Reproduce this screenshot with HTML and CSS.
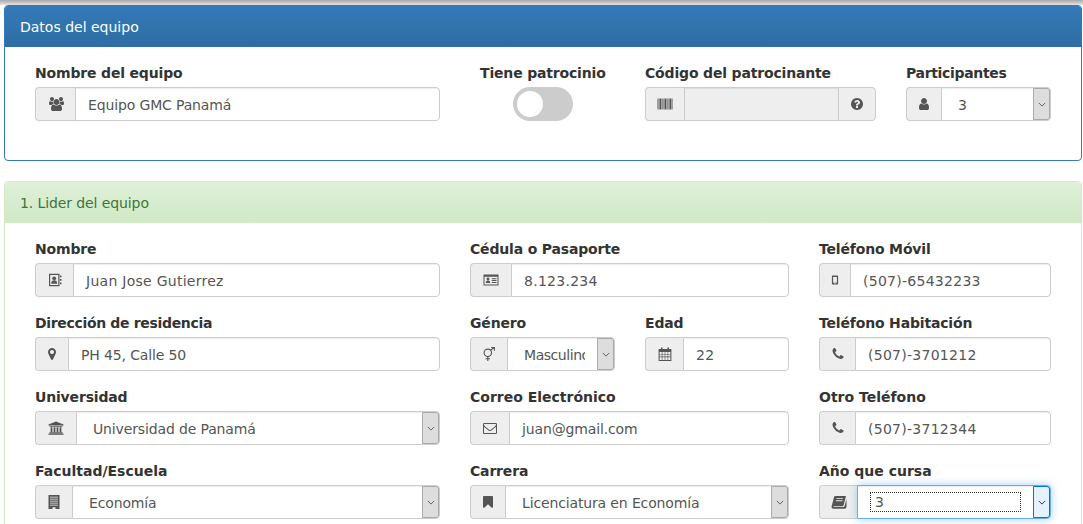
FILE: index.html
```html
<!DOCTYPE html>
<html lang="es">
<head>
<meta charset="utf-8">
<title>Datos del equipo</title>
<link rel="stylesheet" href="styles.css">
</head>
<body>
<svg class="defs" width="0" height="0" aria-hidden="true">
  <symbol id="i-users" viewBox="0 0 1920 1792"><path d="M657 896q-162 5-265 128h-134q-82 0-138-40.5t-56-118.5q0-353 124-353 6 0 43.5 21t97.5 42.5 119 21.5q67 0 133-23-5 37-5 66 0 139 81 256zm1071 637q0 120-73 189.5t-194 69.5h-874q-121 0-194-69.5t-73-189.5q0-53 3.5-103.5t14-109 26.5-108.5 43-97.5 62-81 85.5-53.5 111.5-20q10 0 43 21.5t73 48 107 48 135 21.5 135-21.5 107-48 73-48 43-21.5q61 0 111.5 20t85.5 53.5 62 81 43 97.5 26.5 108.5 14 109 3.5 103.5zm-1024-1277q0 106-75 181t-181 75-181-75-75-181 75-181 181-75 181 75 75 181zm704 384q0 159-112.5 271.5t-271.5 112.5-271.5-112.5-112.5-271.5 112.5-271.5 271.5-112.5 271.5 112.5 112.5 271.5zm576 225q0 78-56 118.5t-138 40.5h-134q-103-123-265-128 81-117 81-256 0-29-5-66 66 23 133 23 59 0 119-21.5t97.5-42.5 43.5-21q124 0 124 353zm-128-609q0 106-75 181t-181 75-181-75-75-181 75-181 181-75 181 75 75 181z"/></symbol>
  <symbol id="i-barcode" viewBox="0 0 16 14"><path d="M.5 1.500h1v11h-1zM2 1.500h.6v11H2zM3 1.500h1v11H3zM4.500 1.500h.6v11h-.6zM5.500 1.500h1v11h-1zM7 1.500h.6v11H7zM8 1.500h1v11H8zM9.500 1.500h.6v11h-.6zM10.500 1.500h1v11h-1zM12 1.500h.6v11H12zM13 1.500h1v11h-1zM14.500 1.500h1v11h-1z"/></symbol>
  <symbol id="i-question" viewBox="0 0 1792 1792"><path d="M1024 1376v-192q0-14-9-23t-23-9h-192q-14 0-23 9t-9 23v192q0 14 9 23t23 9h192q14 0 23-9t9-23zm256-672q0-88-55.5-163t-138.5-116-170-41q-243 0-371 213-15 24 8 42l132 100q7 6 19 6 16 0 25-12 53-68 86-92 34-24 86-24 48 0 85.5 26t37.5 59q0 38-20 61t-68 45q-63 28-115.5 86.5t-52.5 125.5v36q0 14 9 23t23 9h192q14 0 23-9t9-23q0-19 21.5-49.5t54.5-49.5q32-18 49-28.5t46-35 44.5-48 28-60.5 12.5-81zm384 192q0 209-103 385.5t-279.5 279.5-385.5 103-385.5-103-279.5-279.5-103-385.5 103-385.5 279.5-279.5 385.5-103 385.5 103 279.5 279.5 103 385.5z"/></symbol>
  <symbol id="i-user" viewBox="0 0 1792 1792"><path d="M1536 1399q0 109-62.5 187t-150.5 78h-854q-88 0-150.5-78t-62.5-187q0-85 8.5-160.5t31.5-152 58.5-131 94-89 134.5-34.5q131 128 313 128t313-128q76 0 134.5 34.5t94 89 58.5 131 31.5 152 8.5 160.5zm-256-887q0 159-112.5 271.5t-271.5 112.5-271.5-112.5-112.5-271.5 112.5-271.5 271.5-112.5 271.5 112.5 112.5 271.5z"/></symbol>
  <symbol id="i-contact" viewBox="0 0 14 14"><path fill-rule="evenodd" d="M1 .8h10.500v12.400H1zM2.200 2v10h8.100V2z"/><path d="M12 2.500h1.500v1.800H12zM12 6h1.500v1.800H12zM12 9.500h1.500v1.800H12z"/><circle cx="6.200" cy="5.300" r="1.900"/><path d="M3.200 10.800c0-2.500 1.100-3.600 3-3.600s3 1.100 3 3.600z"/></symbol>
  <symbol id="i-idcard" viewBox="0 0 16 14"><path fill-rule="evenodd" d="M.5 1.500h15v11H.5zM1.500 3.800v7.700h13V3.800z"/><circle cx="5" cy="6" r="1.400"/><path d="M2.800 10c0-1.700.9-2.400 2.200-2.400s2.200.7 2.200 2.400zM8.800 5.300h4.700v1H8.800zM8.800 7.100h4.700v1H8.800zM8.800 8.900h4.700v1H8.800z"/></symbol>
  <symbol id="i-mobile" viewBox="0 0 14 14"><path fill-rule="evenodd" d="M4.900 2.400h4.200c.6 0 1 .4 1 1v7.200c0 .6-.4 1-1 1H4.900c-.6 0-1-.4-1-1V3.400c0-.6.4-1 1-1zM5.100 3.900v5.800h3.800V3.900zM6.400 10.300v.7h1.200v-.7z"/></symbol>
  <symbol id="i-marker" viewBox="0 0 1792 1792"><path d="M1152 640q0-106-75-181t-181-75-181 75-75 181 75 181 181 75 181-75 75-181zm256 0q0 109-33 179l-364 774q-16 33-47.500 52t-67.500 19-67.500-19-46.500-52l-365-774q-33-70-33-179 0-212 150-362t362-150 362 150 150 362z"/></symbol>
  <symbol id="i-mercury" viewBox="0 0 14 14"><g fill="none" stroke="currentColor" stroke-width="1.100"><circle cx="5.800" cy="5.800" r="3.700"/><path d="M8.400 3.200 12.200 .5M9.200 .5h3.200v3.200M5.800 9.500V14M3.600 11.800h4.400"/></g></symbol>
  <symbol id="i-calendar" viewBox="0 0 14 14"><path fill-rule="evenodd" d="M.6 2h12.800v12H.6zM1.600 5v2h2.200V5zM4.400 5v2h2.300V5zM7.300 5v2h2.300V5zM10.200 5v2h2.200V5zM1.600 7.600v2h2.200v-2zM4.400 7.600v2h2.300v-2zM7.300 7.600v2h2.300v-2zM10.200 7.600v2h2.200v-2zM1.600 10.200V13h2.200v-2.800zM4.400 10.200V13h2.300v-2.800zM7.300 10.200V13h2.300v-2.800zM10.200 10.200V13h2.200v-2.800z"/><path d="M3 .6h1.500v3H3zM9.500 .6H11v3H9.500z"/></symbol>
  <symbol id="i-phone" viewBox="0 0 1792 1792"><path d="M1600 1240q0 27-10 70.500t-21 68.500q-21 50-122 106-94 51-186 51-27 0-53-3.500t-57.500-12.500-47-14.500-55.500-20.500-49-18q-98-35-175-83-127-79-264-216t-216-264q-48-77-83-175-3-9-18-49t-20.500-55.500-14.500-47-12.500-57.500-3.500-53q0-92 51-186 56-101 106-122 25-11 68.500-21t70.500-10q14 0 21 3 18 6 53 76 11 19 30 54t35 63.500 31 53.500q3 4 17.500 25t21.500 35.500 7 28.500q0 20-28.500 50t-62 55-62 53-28.500 46q0 9 5 22.500t8.500 20.500 14 24 11.500 19q76 137 174 235t235 174q2 1 19 11.500t24 14 20.500 8.500 22.500 5q18 0 46-28.500t53-62 55-62 50-28.500q14 0 28.500 7t35.500 21.500 25 17.500q25 15 53.500 31t63.500 35 54 30q70 35 76 53 3 7 3 21z"/></symbol>
  <symbol id="i-university" viewBox="0 0 16 14"><path d="M8 .5 15.500 3.500v1h-15v-1zM1.500 5h13v.8h-13zM2.600 6.300h1.800v4.600H2.600zM5.600 6.300h1.800v4.600H5.600zM8.600 6.300h1.800v4.600H8.600zM11.600 6.300h1.800v4.600h-1.800zM1.500 11.300h13v.9h-13zM.5 12.500h15v1.200H.5z"/></symbol>
  <symbol id="i-envelope" viewBox="0 0 1792 1792"><path d="M1664 1504v-768q-32 36-69 66-268 206-426 338-51 43-83 67t-86.500 48.500-102.500 24.500h-2q-48 0-102.500-24.500t-86.500-48.500-83-67q-158-132-426-338-37-30-69-66v768q0 13 9.500 22.500t22.500 9.500h1472q13 0 22.500-9.500t9.500-22.500zm0-1051v-24.500l-.5-13-3-12.500-5.500-9-9-7.500-14-2.500h-1472q-13 0-22.500 9.500t-9.500 22.500q0 168 147 284 193 152 401 317 6 5 35 29.500t46 37.500 44.500 31.500 50.500 27.500 43 9h2q20 0 43-9t50.500-27.500 44.500-31.500 46-37.500 35-29.500q208-165 401-317 54-43 100.500-115.500t46.500-131.500zm128-37v1088q0 66-47 113t-113 47h-1472q-66 0-113-47t-47-113v-1088q0-66 47-113t113-47h1472q66 0 113 47t47 113z"/></symbol>
  <symbol id="i-building" viewBox="0 0 14 14"><path fill-rule="evenodd" d="M1.500 0h11v14H8.500v-1.800h-3V14h-4zM3 1.700v.8h8v-.8zM3 3.700v.8h8v-.8zM3 5.700v.8h8v-.8zM3 7.700v.8h8v-.8zM3 9.700v.8h8v-.8z"/></symbol>
  <symbol id="i-bookmark" viewBox="0 0 1792 1792"><path d="M1420 128q23 0 44 9 33 13 52.500 41t19.500 62v1289q0 34-19.500 62t-52.500 41q-19 8-44 8-48 0-83-32l-441-424-441 424q-36 33-83 33-23 0-44-9-33-13-52.500-41t-19.500-62v-1289q0-34 19.500-62t52.500-41q21-9 44-9h1048z"/></symbol>
  <symbol id="i-book" viewBox="0 0 16 14"><path fill-rule="evenodd" d="M4.500 1H15l-2.400 9.200c-.2.700-.7 1-1.300 1H3c-.7 0-.9.9-.1 .9h9.600c.5 0 .8-.3 1-.8L15.500 4v8c-.2 1-1 1.800-2 1.800H2.500C1 13.800.2 12.500.6 11.200L3 2.200C3.200 1.500 3.800 1 4.500 1zM5.600 3.200l-.2 .9h6.500l.2-.9zM5 5.300l-.2 .9h6.500l.2-.9z"/></symbol>
  <symbol id="i-chevron" viewBox="0 0 10 6"><path d="M1 1 5 5 9 1" fill="none" stroke="currentColor" stroke-width="1.100"/></symbol>
</svg>

<div class="topshade"></div>
<main class="page">
  <section class="panel panel-primary">
    <h2 class="panel-heading">Datos del equipo</h2>
    <div class="panel-body team-grid">
      <div class="field">
        <label class="label">Nombre del equipo</label>
        <div class="group">
          <span class="addon w40"><svg class="icon"><use href="#i-users"/></svg></span>
          <div class="control">Equipo GMC Panamá</div>
        </div>
      </div>
      <div class="field switch-field">
        <label class="label">Tiene patrocinio</label>
        <span class="switch"><span class="knob"></span></span>
      </div>
      <div class="field">
        <label class="label">Código del patrocinante</label>
        <div class="group">
          <span class="addon w39"><svg class="icon"><use href="#i-barcode"/></svg></span>
          <div class="control disabled"></div>
          <span class="addon addon-end w38"><svg class="icon"><use href="#i-question"/></svg></span>
        </div>
      </div>
      <div class="field last-field">
        <label class="label snug-label">Participantes</label>
        <div class="group">
          <span class="addon w35"><svg class="icon"><use href="#i-user"/></svg></span>
          <div class="control select"><span class="val">3</span><span class="arrow"><svg class="chev"><use href="#i-chevron"/></svg></span></div>
        </div>
      </div>
    </div>
  </section>

  <section class="panel panel-success">
    <h2 class="panel-heading">1. Lider del equipo</h2>
    <div class="panel-body leader-grid">
      <div class="field">
        <label class="label">Nombre</label>
        <div class="group">
          <span class="addon w38"><svg class="icon"><use href="#i-contact"/></svg></span>
          <div class="control wide">Juan Jose Gutierrez</div>
        </div>
      </div>
      <div class="field span2">
        <label class="label">Cédula o Pasaporte</label>
        <div class="group">
          <span class="addon w41"><svg class="icon"><use href="#i-idcard"/></svg></span>
          <div class="control wide">8.123.234</div>
        </div>
      </div>
      <div class="field">
        <label class="label">Teléfono Móvil</label>
        <div class="group">
          <span class="addon w31"><svg class="icon"><use href="#i-mobile"/></svg></span>
          <div class="control wide">(507)-65432233</div>
        </div>
      </div>

      <div class="field">
        <label class="label snug-label">Dirección de residencia</label>
        <div class="group">
          <span class="addon w33"><svg class="icon"><use href="#i-marker"/></svg></span>
          <div class="control">PH 45, Calle 50</div>
        </div>
      </div>
      <div class="field">
        <label class="label">Género</label>
        <div class="group">
          <span class="addon w37"><svg class="icon"><use href="#i-mercury"/></svg></span>
          <div class="control select snug"><span class="val">Masculino</span><span class="arrow"><svg class="chev"><use href="#i-chevron"/></svg></span></div>
        </div>
      </div>
      <div class="field">
        <label class="label">Edad</label>
        <div class="group">
          <span class="addon w38"><svg class="icon"><use href="#i-calendar"/></svg></span>
          <div class="control wide">22</div>
        </div>
      </div>
      <div class="field">
        <label class="label">Teléfono Habitación</label>
        <div class="group">
          <span class="addon w36"><svg class="icon"><use href="#i-phone"/></svg></span>
          <div class="control wide">(507)-3701212</div>
        </div>
      </div>

      <div class="field">
        <label class="label">Universidad</label>
        <div class="group">
          <span class="addon w41"><svg class="icon"><use href="#i-university"/></svg></span>
          <div class="control select"><span class="val">Universidad de Panamá</span><span class="arrow"><svg class="chev"><use href="#i-chevron"/></svg></span></div>
        </div>
      </div>
      <div class="field span2">
        <label class="label loose-label">Correo Electrónico</label>
        <div class="group">
          <span class="addon w39"><svg class="icon"><use href="#i-envelope"/></svg></span>
          <div class="control">juan@gmail.com</div>
        </div>
      </div>
      <div class="field">
        <label class="label loose-label">Otro Teléfono</label>
        <div class="group">
          <span class="addon w36"><svg class="icon"><use href="#i-phone"/></svg></span>
          <div class="control wide">(507)-3712344</div>
        </div>
      </div>

      <div class="field">
        <label class="label loose-label">Facultad/Escuela</label>
        <div class="group">
          <span class="addon w37"><svg class="icon"><use href="#i-building"/></svg></span>
          <div class="control select"><span class="val">Economía</span><span class="arrow"><svg class="chev"><use href="#i-chevron"/></svg></span></div>
        </div>
      </div>
      <div class="field span2">
        <label class="label">Carrera</label>
        <div class="group">
          <span class="addon w35"><svg class="icon"><use href="#i-bookmark"/></svg></span>
          <div class="control select"><span class="val">Licenciatura en Economía</span><span class="arrow"><svg class="chev"><use href="#i-chevron"/></svg></span></div>
        </div>
      </div>
      <div class="field">
        <label class="label loose-label">Año que cursa</label>
        <div class="group">
          <span class="addon w38"><svg class="icon"><use href="#i-book"/></svg></span>
          <div class="control select focused"><span class="val"><span class="dotted">3</span></span><span class="arrow"><svg class="chev"><use href="#i-chevron"/></svg></span></div>
        </div>
      </div>
    </div>
  </section>
</main>
</body>
</html>
```
FILE: styles.css
```css
* { box-sizing: border-box; }
html, body { height: 100%; }
body {
  margin: 0;
  overflow: hidden;
  background: #fff;
  color: #333;
  font-family: "DejaVu Sans", Verdana, sans-serif;
  font-size: 14px;
  line-height: 20px;
}
.defs { position: absolute; }
.topshade {
  height: 5px;
  background: linear-gradient(#a8a8a8, #e4e4e4);
}
.page {
  padding: 0 1px 0 4px;
  display: flex;
  flex-direction: column;
  gap: 20px;
}
.panel {
  flex: none;
  border: 1px solid;
  border-radius: 4px;
  background: #fff;
}
.panel-primary { border-color: #337ab7; }
.panel-success { border-color: #d6e9c6; }
.panel-heading {
  margin: 0;
  padding: 11px 15px 10px;
  height: 41px;
  font-size: 14px;
  font-weight: 400;
  line-height: 20px;
  border-radius: 3px 3px 0 0;
}
.panel-primary .panel-heading {
  color: #fff;
  background: linear-gradient(#337ab7, #2e6da4);
}
.panel-success .panel-heading {
  color: #3c763d;
  letter-spacing: -.1px;
  background: linear-gradient(#dff0d8, #d0e9c6);
}
.panel-body {
  display: grid;
  padding: 15px 30px 9px;
}
.team-grid {
  padding-bottom: 24px;
  grid-template-columns: 405px 125px 231px 145px;
  column-gap: 40px;
  justify-content: start;
}
.last-field { margin-left: -10px; width: 145px; }
.leader-grid {
  grid-template-columns: 405px 145px 144px 232px;
  column-gap: 30px;
  justify-content: start;
}
.span2 { grid-column: span 2; }
.field { margin-bottom: 15px; min-width: 0; }
.label {
  display: block;
  margin-bottom: 4px;
  padding-top: 1px;
  font-weight: 700;
  line-height: 20px;
  letter-spacing: -.17px;
  white-space: nowrap;
}
.snug-label { letter-spacing: -.33px; }
.loose-label { letter-spacing: 0; }
.switch-field { text-align: center; }
.switch {
  display: block;
  width: 60px;
  height: 34px;
  margin: 0 auto;
  padding: 4px;
  border-radius: 17px;
  background: #ccc;
}
.knob {
  display: block;
  width: 26px;
  height: 26px;
  border-radius: 50%;
  background: #fff;
}
.group {
  display: flex;
  height: 34px;
}
.addon {
  flex: none;
  display: flex;
  align-items: center;
  justify-content: center;
  border: 1px solid #ccc;
  border-right: 0;
  border-radius: 4px 0 0 4px;
  background: #eee;
  color: #555;
}
.addon-end {
  border-right: 1px solid #ccc;
  border-left: 1px solid #ccc;
  border-radius: 0 4px 4px 0;
}
.w31 { width: 31px; }
.w33 { width: 33px; }
.w35 { width: 35px; }
.w36 { width: 36px; }
.w37 { width: 37px; }
.w38 { width: 38px; }
.w39 { width: 39px; }
.w40 { width: 40px; }
.w41 { width: 41px; }
.icon {
  width: 16px;
  height: 14px;
  fill: currentColor;
}
.control {
  flex: 1;
  min-width: 0;
  display: flex;
  align-items: center;
  padding: 2px 12px 0;
  border: 1px solid #ccc;
  border-radius: 0 4px 4px 0;
  background: #fff;
  color: #555;
  letter-spacing: -.14px;
  box-shadow: inset 0 1px 1px rgba(0, 0, 0, .075);
  white-space: nowrap;
}
.wide { letter-spacing: .27px; }
.disabled {
  background: #eee;
  border-radius: 0;
  border-right: 0;
}
.select { padding: 0 0 0 16px; }
.snug { letter-spacing: -.45px; }
.val {
  flex: 1;
  min-width: 0;
  padding-top: 2px;
  overflow: hidden;
}
.arrow {
  flex: none;
  width: 17px;
  height: 100%;
  margin-left: 12px;
  display: flex;
  align-items: center;
  justify-content: center;
  background: #ddd;
  border: 1px solid #aaa;
  border-radius: 0 3px 3px 0;
  color: #555;
}
.chev { width: 8px; height: 5px; }
.focused {
  padding-left: 12px;
  border-color: #66afe9;
  box-shadow: inset 0 1px 1px rgba(0, 0, 0, .075), 0 0 8px rgba(102, 175, 233, .6);
}
.focused .val { padding-top: 0; }
.focused .arrow {
  background: #e5f1fb;
  border-color: #0078d7;
  color: #222;
}
.dotted {
  display: block;
  height: 20px;
  line-height: 19px;
  padding-left: 4px;
  border: 1px dotted #333;
}
```
